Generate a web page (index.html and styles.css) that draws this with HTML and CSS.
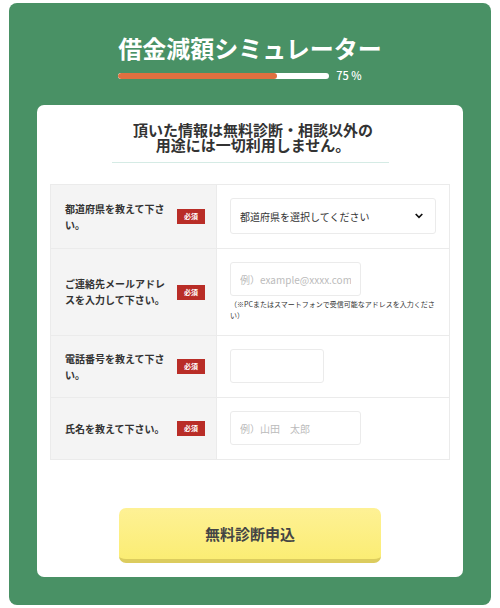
FILE: index.html
```html
<!DOCTYPE html>
<html lang="ja">
<head>
    <meta charset="UTF-8">
    <meta name="viewport" content="width=device-width, initial-scale=1.0">
    <title>借金減額シミュレーター</title>
    <link rel="stylesheet" href="styles.css">
</head>
<body>
<div class="simulator">
    <header class="header">
        <h1>借金減額シミュレーター</h1>
        <div class="progress">
            <progress id="step" value="75" max="100"></progress>
            <label for="step">75 %</label>
        </div>
    </header>

    <form class="card">
        <h2>頂いた情報は無料診断・相談以外の<br>用途には一切利用しません。</h2>

        <table class="form-table">
            <tr>
                <th>
                    <div class="question">
                        <label for="pref">都道府県を教えて下さい。</label>
                        <span class="required">必須</span>
                    </div>
                </th>
                <td>
                    <select id="pref" name="pref">
                        <option value="">都道府県を選択してください</option>
                        <option>北海道</option>
                        <option>東京都</option>
                        <option>愛知県</option>
                        <option>大阪府</option>
                        <option>福岡県</option>
                    </select>
                </td>
            </tr>
            <tr>
                <th>
                    <div class="question">
                        <label for="email">ご連絡先メールアドレスを入力して下さい。</label>
                        <span class="required">必須</span>
                    </div>
                </th>
                <td>
                    <input type="email" id="email" name="email" placeholder="例）example@xxxx.com">
                    <p class="note">（※PCまたはスマートフォンで受信可能なアドレスを入力ください）</p>
                </td>
            </tr>
            <tr>
                <th>
                    <div class="question">
                        <label for="tel">電話番号を教えて下さい。</label>
                        <span class="required">必須</span>
                    </div>
                </th>
                <td>
                    <input type="tel" id="tel" name="tel" class="short">
                </td>
            </tr>
            <tr>
                <th>
                    <div class="question">
                        <label for="fullname">氏名を教えて下さい。</label>
                        <span class="required">必須</span>
                    </div>
                </th>
                <td>
                    <input type="text" id="fullname" name="fullname" placeholder="例）山田　太郎">
                </td>
            </tr>
        </table>

        <button type="submit" class="submit-btn">無料診断申込</button>
    </form>
</div>
</body>
</html>
```
FILE: styles.css
```css
* {
    box-sizing: border-box;
}

body {
    margin: 0;
    padding: 3px 9px 4px;
    background: #fff;
    color: #333;
    font-family: "Noto Sans CJK JP", sans-serif;
    font-size: 10px;
}

.simulator {
    padding: 31px 28px 28px;
    background: #499165;
    border-radius: 8px;
}

.header {
    display: flex;
    flex-direction: column;
    align-items: center;
    color: #fff;
}

h1 {
    margin: 0;
    font-size: 24px;
    line-height: 28px;
    font-weight: bold;
}

.progress {
    display: flex;
    align-items: center;
    gap: 7px;
    margin: 5px 20px 21px 0;
}

.progress label {
    font-size: 11px;
    line-height: 17px;
    font-weight: 500;
}

progress {
    -webkit-appearance: none;
    appearance: none;
    width: 211px;
    height: 6px;
    border: none;
    border-radius: 3px;
    overflow: hidden;
    background: #fff;
}

progress::-webkit-progress-bar {
    background: #fff;
}

progress::-webkit-progress-value {
    background: #e07040;
    border-radius: 3px;
}

/* white form area */
.card {
    padding: 17px 13px 14px;
    background: #fff;
    border-radius: 7px;
}

h2 {
    max-width: 277px;
    margin: 0 auto 21px;
    padding: 0 0 10px 6px;
    border-bottom: 1px solid #d5ebe5;
    font-size: 15px;
    line-height: 15px;
    text-align: center;
    white-space: nowrap;
}

.form-table {
    width: 100%;
    border-collapse: collapse;
    table-layout: fixed;
}

.form-table th,
.form-table td {
    border: 1px solid #ebebeb;
    text-align: left;
    vertical-align: middle;
}

.form-table th {
    width: 166px;
    padding: 0 11px 0 14px;
    background: #f4f4f4;
}

.form-table td {
    padding: 13px 13px 14px;
}

.question {
    display: flex;
    align-items: center;
    justify-content: space-between;
    gap: 8px;
}

.question label {
    line-height: 16px;
}

.required {
    flex: none;
    padding: 0 7px;
    background: #b92d27;
    color: #fff;
    font-size: 7px;
    line-height: 15px;
}

select,
input {
    display: block;
    border: 1px solid #ebebeb;
    border-radius: 3px;
    background-color: #fff;
    color: #333;
    font-family: inherit;
    font-size: 10px;
}

select {
    -webkit-appearance: none;
    appearance: none;
    width: 100%;
    height: 36px;
    padding: 0 30px 0 9px;
    background-image: url("data:image/svg+xml,%3Csvg xmlns='http://www.w3.org/2000/svg' viewBox='0 0 8 6'%3E%3Cpath d='M.7 1 4 4.3 7.3 1' fill='none' stroke='%23111' stroke-width='1.7'/%3E%3C/svg%3E");
    background-repeat: no-repeat;
    background-position: right 12px center;
    background-size: 8px 6px;
}

input {
    width: 131px;
    height: 34px;
    padding: 0 9px;
}

input.short {
    width: 94px;
}

input::placeholder {
    color: #bbb;
}

.note {
    margin: 3px 0 0;
    font-size: 7px;
    line-height: 11px;
}

.submit-btn {
    display: block;
    width: 100%;
    max-width: 262px;
    height: 55px;
    margin: 48px auto 0;
    padding: 0;
    border: none;
    border-bottom: 4px solid #dccc5e;
    border-radius: 7px;
    background: linear-gradient(#fef195, #fbed74);
    color: #444;
    font-family: inherit;
    font-size: 15px;
    font-weight: bold;
    cursor: pointer;
}
```
